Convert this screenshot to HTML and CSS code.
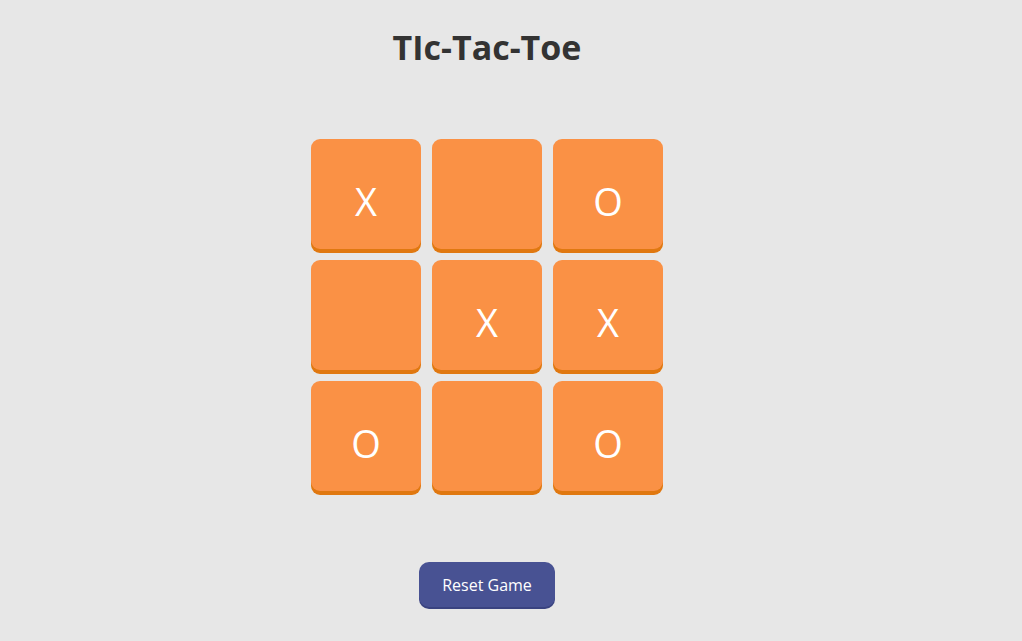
FILE: index.html
```html
<!DOCTYPE html>
<html>
<head>
<meta charset="utf-8">
<link rel="stylesheet" href="styles.css">
</head>
<body>
<div class="app">
  <h1 class="title">TIc-Tac-Toe</h1>
  <div class="board">
    <div class="cell">X</div>
    <div class="cell"></div>
    <div class="cell">O</div>
    <div class="cell"></div>
    <div class="cell">X</div>
    <div class="cell">X</div>
    <div class="cell">O</div>
    <div class="cell"></div>
    <div class="cell">O</div>
  </div>
  <button class="reset">Reset Game</button>
</div>
</body>
</html>
```
FILE: styles.css
```css
html, body {
  margin: 0;
  padding: 0;
  background: #e7e7e7;
}
body {
  font-family: "Open Sans", "Noto Sans", sans-serif;
  height: 641px;
}
.app {
  width: 974px;
  display: flex;
  flex-direction: column;
  align-items: center;
}
.title {
  margin: 24px 0 0;
  font-size: 34px;
  font-weight: 700;
  color: #333333;
  line-height: 46px;
}
.board {
  margin-top: 69px;
  display: grid;
  grid-template-columns: repeat(3, 110px);
  grid-auto-rows: 110px;
  gap: 11px;
}
.cell {
  background: #fa9145;
  border-radius: 9px;
  box-shadow: 0 4px 0 #e07810;
  color: #ffffff;
  font-size: 38px;
  display: flex;
  align-items: center;
  justify-content: center;
  padding-top: 14px;
  box-sizing: border-box;
}
.reset {
  margin-top: 71px;
  width: 136px;
  height: 45px;
  background: #485293;
  color: #ffffff;
  border: none;
  border-radius: 10px;
  box-shadow: 0 2px 0 #3a4380;
  font-family: "Open Sans", "Noto Sans", sans-serif;
  font-size: 16px;
}
```
